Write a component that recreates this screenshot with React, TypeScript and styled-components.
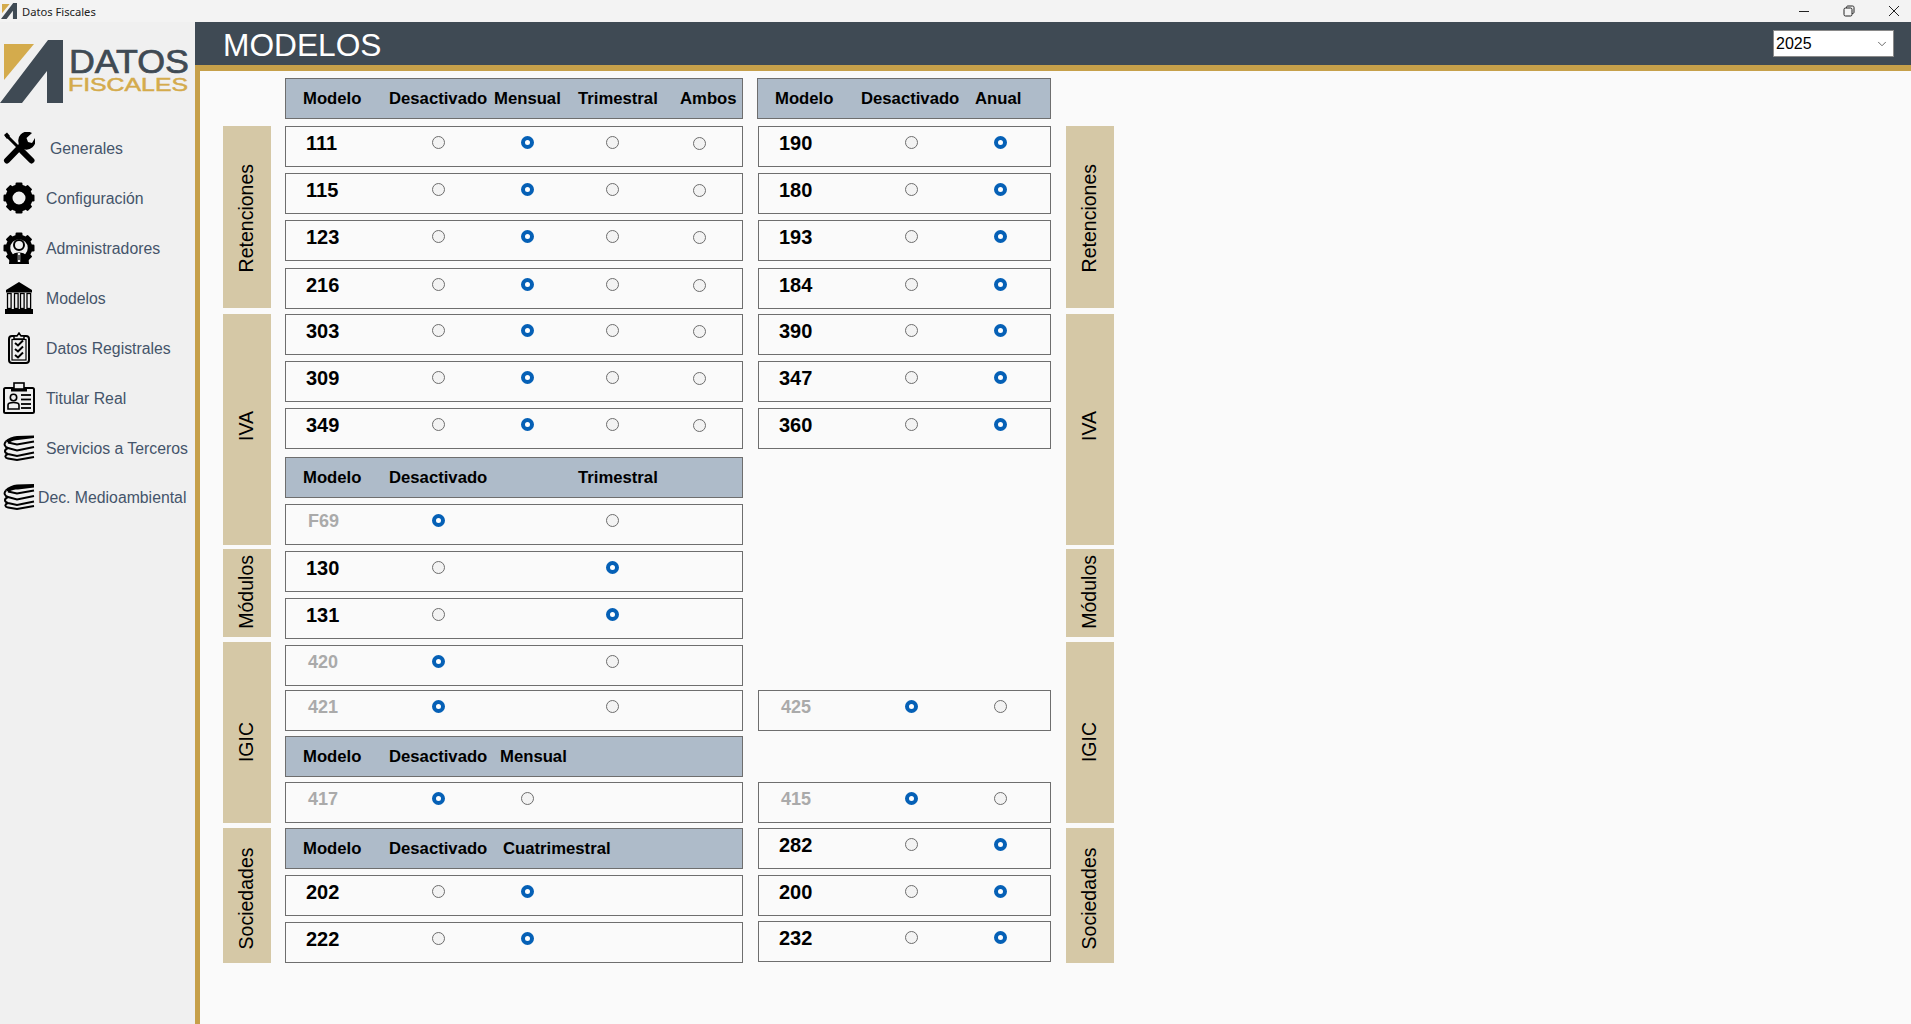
import styled, { createGlobalStyle } from 'styled-components'
import { ChevronDown } from 'lucide-react'

const SANS = '"Liberation Sans", Arial, sans-serif'

const TWO_RADIOS = '105px 95px 83px'
const WIDE_RADIOS = '105px 95px 253px'
const FOUR_RADIOS = '105px 95px 83px 87px 86px'

type HeadItem = { kind: 'head'; top: number; tracks: string; labels: string[] }
type RowItem = {
  kind: 'row'
  top: number
  name: string
  tracks: string
  radios: number
  selected: number
  muted?: boolean
}
type Item = HeadItem | RowItem

const row = (
  top: number,
  name: string,
  selected: number,
  tracks = FOUR_RADIOS,
  radios = 4,
  muted = false,
): RowItem => ({ kind: 'row', top, name, tracks, radios, selected, muted })

const leftItems: Item[] = [
  { kind: 'head', top: 0, tracks: '86px 105px 84px 102px auto', labels: ['Modelo', 'Desactivado', 'Mensual', 'Trimestral', 'Ambos'] },
  row(7, '111', 1),
  row(6, '115', 1),
  row(6, '123', 1),
  row(7, '216', 1),
  row(5, '303', 1),
  row(6, '309', 1),
  row(6, '349', 1),
  { kind: 'head', top: 8, tracks: '86px 189px auto', labels: ['Modelo', 'Desactivado', 'Trimestral'] },
  row(6, 'F69', 0, WIDE_RADIOS, 2, true),
  row(6, '130', 1, WIDE_RADIOS, 2),
  row(6, '131', 1, WIDE_RADIOS, 2),
  row(6, '420', 0, WIDE_RADIOS, 2, true),
  row(4, '421', 0, WIDE_RADIOS, 2, true),
  { kind: 'head', top: 5, tracks: '86px 111px auto', labels: ['Modelo', 'Desactivado', 'Mensual'] },
  row(5, '417', 0, TWO_RADIOS, 2, true),
  { kind: 'head', top: 5, tracks: '86px 114px auto', labels: ['Modelo', 'Desactivado', 'Cuatrimestral'] },
  row(6, '202', 1, TWO_RADIOS, 2),
  row(6, '222', 1, TWO_RADIOS, 2),
]

const rightItems: Item[] = [
  { kind: 'head', top: 0, tracks: '86px 114px auto', labels: ['Modelo', 'Desactivado', 'Anual'] },
  row(7, '190', 1, TWO_RADIOS, 2),
  row(6, '180', 1, TWO_RADIOS, 2),
  row(6, '193', 1, TWO_RADIOS, 2),
  row(7, '184', 1, TWO_RADIOS, 2),
  row(5, '390', 1, TWO_RADIOS, 2),
  row(6, '347', 1, TWO_RADIOS, 2),
  row(6, '360', 1, TWO_RADIOS, 2),
  row(241, '425', 0, TWO_RADIOS, 2, true),
  row(51, '415', 0, TWO_RADIOS, 2, true),
  row(5, '282', 1, TWO_RADIOS, 2),
  row(6, '200', 1, TWO_RADIOS, 2),
  row(5, '232', 1, TWO_RADIOS, 2),
]

const tags = [
  { label: 'Retenciones', top: 0, height: 182, shift: 1 },
  { label: 'IVA', top: 6, height: 231, shift: -4 },
  { label: 'Módulos', top: 3.5, height: 88, shift: -1 },
  { label: 'IGIC', top: 5.5, height: 181, shift: 10 },
  { label: 'Sociedades', top: 5, height: 135, shift: 2.5 },
]

function LogoMark({ className }: { className?: string }) {
  return (
    <svg className={className} viewBox="0 4 63 63">
      <polygon points="4,8 34,8 4,44" fill="#d4ab4c" />
      <polygon points="48,4 63,4 63,67 47,67 47,35 22,67 0,67" fill="#3f4a54" />
    </svg>
  )
}

function Logo() {
  return (
    <svg width="195" height="72" viewBox="0 0 195 72">
      <polygon points="4,8 34,8 4,44" fill="#d4ab4c" />
      <polygon points="48,4 63,4 63,67 47,67 47,35 22,67 0,67" fill="#3f4a54" />
      <text x="69" y="37" fontFamily={SANS} fontSize="33" fill="#3f4a54" stroke="#3f4a54" strokeWidth="0.7" textLength="120" lengthAdjust="spacingAndGlyphs">
        DATOS
      </text>
      <text x="68" y="55" fontFamily={SANS} fontSize="18.5" fill="#d4ab4c" stroke="#d4ab4c" strokeWidth="0.5" textLength="120" lengthAdjust="spacingAndGlyphs">
        FISCALES
      </text>
    </svg>
  )
}

function ToolsIcon() {
  return (
    <svg width="32" height="32" viewBox="0 0 32 32">
      <path d="M3 3 L17 17" stroke="#000" strokeWidth="3" />
      <path d="M1 3 L4 0.5 L7 4 L4 7 Z" fill="#000" />
      <path d="M19 19 L28.5 28.5" stroke="#000" strokeWidth="6" strokeLinecap="round" />
      <path d="M4 28.5 L19 13" stroke="#000" strokeWidth="6" strokeLinecap="round" />
      <path d="M17 14 A9 9 0 0 1 29 1 L23.5 6 L25 10 L29 11 L32 6 A9 9 0 0 1 20 17 Z" fill="#000" />
    </svg>
  )
}

function GearTeeth() {
  return (
    <>
      {[0, 45, 90, 135, 180, 225, 270, 315].map(angle => (
        <rect key={angle} x="12.5" y="0.5" width="7" height="6.5" rx="1.2" fill="#000" transform={`rotate(${angle} 16 16)`} />
      ))}
    </>
  )
}

function GearIcon() {
  return (
    <svg width="32" height="32" viewBox="0 0 32 32">
      <GearTeeth />
      <circle cx="16" cy="16" r="10" fill="none" stroke="#000" strokeWidth="7" />
    </svg>
  )
}

function AdminIcon() {
  return (
    <svg width="32" height="32" viewBox="0 0 32 32">
      <GearTeeth />
      <circle cx="16" cy="16" r="11" fill="#f0f0f0" stroke="#000" strokeWidth="4.5" />
      <circle cx="16" cy="13" r="5" fill="#f0f0f0" stroke="#000" strokeWidth="2" />
      <path d="M6 32 C6 24 10 20.5 16 20.5 C22 20.5 26 24 26 32 Z" fill="#000" />
      <path d="M16 21 L16 30" stroke="#f0f0f0" strokeWidth="2.5" />
      <path d="M16 23 L16 28" stroke="#000" strokeWidth="1.2" />
    </svg>
  )
}

function BankIcon() {
  return (
    <svg width="32" height="32" viewBox="-2 0 32 32">
      <polygon points="14,0 27,8 27,10.5 1,10.5 1,8" fill="#000" />
      {[2.5, 9.5, 15.5, 22].map(x => (
        <rect key={x} x={x} y="11.5" width="3.6" height="15" fill="none" stroke="#000" strokeWidth="1.3" />
      ))}
      <rect x="0" y="27" width="28" height="5" fill="#000" />
    </svg>
  )
}

function ClipboardIcon() {
  return (
    <svg width="32" height="32" viewBox="-5 0 32 32">
      <rect x="1" y="4" width="20" height="27" rx="3" fill="none" stroke="#000" strokeWidth="2" />
      <rect x="4" y="7.5" width="14" height="20.5" fill="none" stroke="#000" strokeWidth="1.2" />
      <path d="M6 7 L6 4 L9 4 L11 1 L13 4 L16 4 L16 7 Z" fill="#f0f0f0" stroke="#000" strokeWidth="1.5" />
      {[11, 17, 23].map(y => (
        <path key={y} d={`M7 ${y} L10 ${y + 2.5} L15 ${y - 2.5}`} fill="none" stroke="#000" strokeWidth="2" />
      ))}
    </svg>
  )
}

function BadgeIcon() {
  return (
    <svg width="32" height="32" viewBox="0 0 32 32">
      <rect x="1" y="6" width="30" height="25" rx="1.5" fill="none" stroke="#000" strokeWidth="2" />
      <rect x="11" y="1" width="10" height="6" fill="#f0f0f0" stroke="#000" strokeWidth="1.6" />
      <rect x="8" y="7" width="16" height="2.5" fill="#000" />
      <circle cx="10.5" cy="15.5" r="3.2" fill="none" stroke="#000" strokeWidth="1.6" />
      <path d="M5 27 L5 23 C5 21 7.5 20.5 10.5 20.5 C13.5 20.5 16 21 16 23 L16 27 Z" fill="none" stroke="#000" strokeWidth="1.6" />
      {[13, 17.5, 22, 26].map(y => (
        <path key={y} d={`M18 ${y} L28 ${y}`} stroke="#000" strokeWidth="1.8" />
      ))}
    </svg>
  )
}

function BooksIcon({ heavy }: { heavy?: boolean }) {
  return (
    <svg width="32" height="26" viewBox="0 0 32 26">
      <path
        d={heavy ? 'M2 6 C5 2.5 10 1 14 0.5 L31 0 L31 3.5 L15 5.5 C12 5.5 8 6 6 8 Z' : 'M2 6 C5 3 10 1.5 14 1 L31 0.5 L31 3 L15 5 C12 5 8 6 6 8 Z'}
        fill="#000"
      />
      <g fill="none" stroke="#000" strokeWidth="2">
        <path d="M31 6.5 L14 9.5 L5 7.5" />
        <path d="M3 6.5 C0.5 9 1.5 12 5 13 L14 15.5 L31 12" />
        <path d="M5 13 C0.5 15 1.5 18 5 19 L14 21 L31 17.5" />
        <path d="M5 19 C1 20.5 2 23 5 23.5 L14 25 L31 22" />
      </g>
    </svg>
  )
}

const navItems = [
  { label: 'Generales', icon: <ToolsIcon />, gap: 15 },
  { label: 'Configuración', icon: <GearIcon />, gap: 11 },
  { label: 'Administradores', icon: <AdminIcon />, gap: 11 },
  { label: 'Modelos', icon: <BankIcon />, gap: 11 },
  { label: 'Datos Registrales', icon: <ClipboardIcon />, gap: 11 },
  { label: 'Titular Real', icon: <BadgeIcon />, gap: 11 },
  { label: 'Servicios a Terceros', icon: <BooksIcon />, gap: 11 },
  { label: 'Dec. Medioambiental', icon: <BooksIcon heavy />, gap: 3 },
]

function TableColumn({ items, group }: { items: Item[]; group: string }) {
  return (
    <Column>
      {items.map((item, index) =>
        item.kind === 'head' ? (
          <HeadRow key={index} $top={item.top} $tracks={item.tracks}>
            {item.labels.map(label => (
              <span key={label}>{label}</span>
            ))}
          </HeadRow>
        ) : (
          <ModelRow key={index} $top={item.top} $tracks={item.tracks}>
            <ModelName $muted={item.muted}>{item.name}</ModelName>
            {Array.from({ length: item.radios }, (_, i) => (
              <Radio
                key={i}
                name={`${group}-${item.name}`}
                defaultChecked={i === item.selected}
                $low={i === 3}
              />
            ))}
          </ModelRow>
        ),
      )}
    </Column>
  )
}

function TagColumn({ nudge }: { nudge: number }) {
  return (
    <Tags>
      {tags.map(tag => (
        <Tag key={tag.label} $top={tag.top} $height={tag.height}>
          <TagLabel $shift={tag.shift} $nudge={nudge}>
            {tag.label}
          </TagLabel>
        </Tag>
      ))}
    </Tags>
  )
}

function App() {
  return (
    <>
      <GlobalStyle />
      <Page>
        <TitleBar>
          <TitleLeft>
            <TitleLogo />
            <TitleText>Datos Fiscales</TitleText>
          </TitleLeft>
          <WindowButtons>
            <svg width="12" height="12" viewBox="0 0 12 12">
              <path d="M1 6.5 L11 6.5" stroke="#222" strokeWidth="1" />
            </svg>
            <svg width="12" height="12" viewBox="0 0 12 12">
              <rect x="1" y="3" width="8" height="8" rx="1.5" fill="none" stroke="#222" strokeWidth="1" />
              <path d="M3.5 3 L3.5 2.5 C3.5 1.5 4 1 5 1 L9.5 1 C10.5 1 11 1.5 11 2.5 L11 7 C11 8 10.5 8.5 9.5 8.5 L9 8.5" fill="none" stroke="#222" strokeWidth="1" />
            </svg>
            <svg width="12" height="12" viewBox="0 0 12 12">
              <path d="M1 1 L11 11 M11 1 L1 11" stroke="#222" strokeWidth="1" />
            </svg>
          </WindowButtons>
        </TitleBar>
        <Body>
          <Sidebar>
            <Logo />
            <Nav>
              {navItems.map(item => (
                <NavItem key={item.label} $gap={item.gap}>
                  <NavIcon>{item.icon}</NavIcon>
                  <NavLabel>{item.label}</NavLabel>
                </NavItem>
              ))}
            </Nav>
          </Sidebar>
          <Main>
            <Header>
              <Title>MODELOS</Title>
              <YearSelect>
                2025
                <ChevronDown size={14} color="#555" strokeWidth={1.5} />
              </YearSelect>
            </Header>
            <Content>
              <TagColumn nudge={-1} />
              <TableColumn items={leftItems} group="left" />
              <RightColumn>
                <TableColumn items={rightItems} group="right" />
              </RightColumn>
              <TagColumn nudge={-1} />
            </Content>
          </Main>
        </Body>
      </Page>
    </>
  )
}

export default App

const GlobalStyle = createGlobalStyle`
  html, body, #root {
    margin: 0;
    height: 100%;
  }
  body {
    font-family: ${SANS};
    background: #f0f0f0;
    overflow: hidden;
  }
  * {
    box-sizing: border-box;
  }
`

const Page = styled.div`
  display: flex;
  flex-direction: column;
  height: 100vh;
`

const TitleBar = styled.div`
  display: flex;
  align-items: center;
  justify-content: space-between;
  height: 22px;
  flex-shrink: 0;
  background: #f3f3f3;
`

const TitleLeft = styled.div`
  display: flex;
  align-items: center;
  gap: 5px;
  padding-left: 1px;
`

const TitleLogo = styled(LogoMark)`
  width: 16px;
  height: 16px;
`

const TitleText = styled.span`
  font-family: 'Noto Sans', sans-serif;
  font-size: 11.2px;
  color: #222;
`

const WindowButtons = styled.div`
  display: flex;
  align-items: center;
  gap: 33px;
  padding-right: 11px;
`

const Body = styled.div`
  display: flex;
  flex: 1;
  min-height: 0;
`

const Sidebar = styled.aside`
  width: 195px;
  flex-shrink: 0;
  padding-top: 14px;
  background: #f0f0f0;
`

const Nav = styled.nav`
  margin-top: 11px;
`

const NavItem = styled.div<{ $gap: number }>`
  display: flex;
  align-items: center;
  gap: ${p => p.$gap}px;
  height: 50px;
  padding-left: 3px;
  font-size: 15.8px;
  color: #44546a;
  white-space: nowrap;

  &:last-child {
    height: 48px;
  }
`

const NavIcon = styled.div`
  display: flex;
  align-items: center;
  width: 32px;
  flex-shrink: 0;
`

const NavLabel = styled.span`
  padding-top: 2px;
`

const Main = styled.main`
  display: flex;
  flex-direction: column;
  flex: 1;
  min-width: 0;
`

const Header = styled.header`
  display: flex;
  align-items: center;
  justify-content: space-between;
  height: 49px;
  flex-shrink: 0;
  padding: 0 17px 0 28px;
  background: #3f4a54;
  border-bottom: 6px solid #c6a04a;
`

const Title = styled.h1`
  margin: 4px 0 0;
  font-size: 31.7px;
  font-weight: 400;
  color: #fff;
`

const YearSelect = styled.div`
  display: flex;
  align-items: center;
  justify-content: space-between;
  width: 121px;
  height: 27px;
  padding: 0 4px 0 2px;
  background: #fff;
  border: 1px solid #8a8a8a;
  font-size: 16px;
  color: #000;
`

const Content = styled.div`
  display: flex;
  align-items: flex-start;
  flex: 1;
  gap: 14px;
  padding: 7px 0 0 23px;
  background: #fafafa;
  border-left: 5px solid #c6a04a;
`

const Column = styled.div`
  display: flex;
  flex-direction: column;
  width: 458px;
`

const HeadRow = styled.div<{ $top: number; $tracks: string }>`
  display: grid;
  grid-template-columns: ${p => p.$tracks};
  align-items: center;
  flex-shrink: 0;
  height: 41px;
  margin-top: ${p => p.$top}px;
  padding-left: 17px;
  background: #aebbc9;
  border: 1px solid #6e6e6e;
  font-size: 16.7px;
  font-weight: 700;
  color: #000;
  white-space: nowrap;
`

const ModelRow = styled.div<{ $top: number; $tracks: string }>`
  display: grid;
  grid-template-columns: ${p => p.$tracks};
  align-items: center;
  justify-items: center;
  flex-shrink: 0;
  height: 41px;
  margin-top: ${p => p.$top}px;
  padding-bottom: 8px;
  background: #fafafa;
  border: 1px solid #6e6e6e;
`

const RightColumn = styled.div`
  width: 294px;
  margin-right: 1px;

  ${Column} {
    width: 294px;
  }

  ${ModelRow} {
    margin-left: 1px;
  }
`

const Tags = styled.div`
  display: flex;
  flex-direction: column;
  width: 48px;
  padding-top: 48px;
`

const Tag = styled.div<{ $top: number; $height: number }>`
  display: flex;
  align-items: center;
  justify-content: center;
  margin-top: ${p => p.$top}px;
  height: ${p => p.$height}px;
  background: #d5c8a6;
`

const TagLabel = styled.span<{ $shift: number; $nudge: number }>`
  writing-mode: vertical-rl;
  transform: translate(${p => p.$nudge}px, ${p => p.$shift}px) rotate(180deg);
  font-size: 19.5px;
  color: #000;
`

const ModelName = styled.span<{ $muted?: boolean }>`
  justify-self: start;
  padding-top: 2px;
  padding-left: ${p => (p.$muted ? '22px' : '20px')};
  font-size: ${p => (p.$muted ? '18px' : '20px')};
  font-weight: 700;
  color: ${p => (p.$muted ? '#aaaaaa' : '#000')};
`

const Radio = styled.input.attrs({ type: 'radio' })<{ $low?: boolean }>`
  appearance: none;
  width: 13px;
  height: 13px;
  margin: ${p => (p.$low ? '2px' : '0')} 0 0;
  background: #f3f3f3;
  border: 1px solid #6d6d6d;
  border-radius: 50%;

  &:checked {
    background: #fff;
    border: 4.5px solid #0560b6;
  }
`
